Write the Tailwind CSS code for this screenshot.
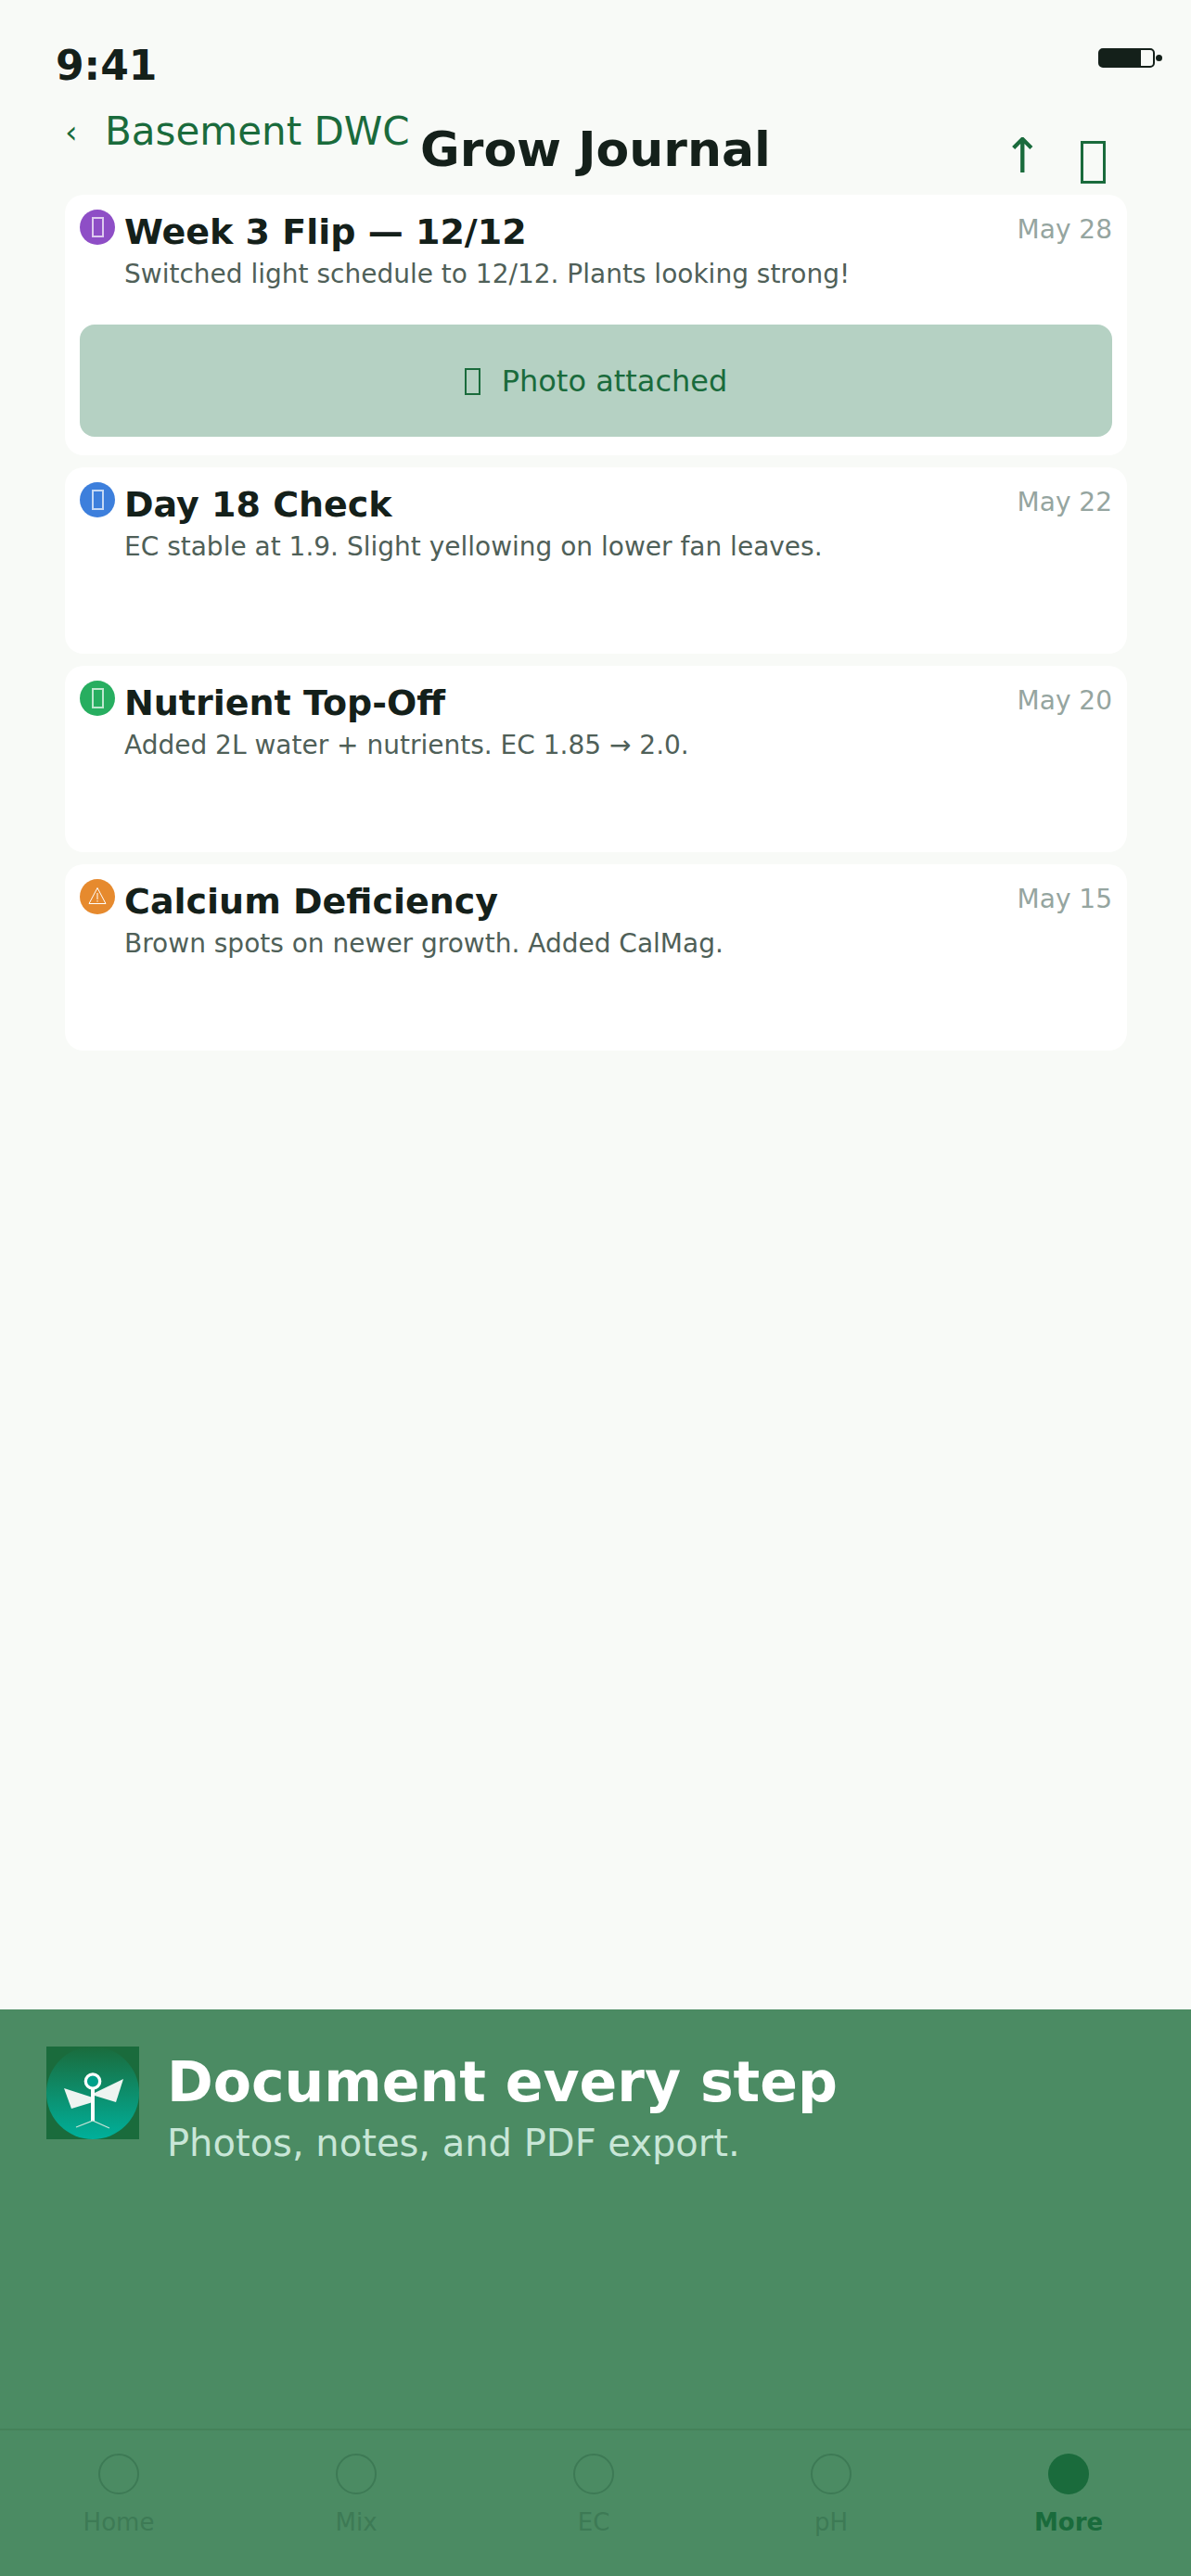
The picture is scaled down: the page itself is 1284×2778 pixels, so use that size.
<!DOCTYPE html>
<html><head><meta charset="utf-8"><script src="https://cdn.jsdelivr.net/npm/@tailwindcss/browser@4"></script></head>
<body class="m-0">
<div class="w-[1284px] h-[2778px] overflow-hidden flex flex-col bg-[#f8faf7] font-['DejaVu_Sans',sans-serif] text-[#14201a]">
  <div class="h-[112px] px-[60px] pt-[46px] flex justify-between items-start shrink-0">
    <span class="text-[44px] leading-[50px] font-bold">9:41</span>
    <div class="flex items-center gap-[1px] mt-[6px] mr-[-29px]">
      <div class="w-[61px] h-[21px] rounded-[5px] border-[2px] border-[#14201a]"><div class="w-[44px] h-full bg-[#14201a]"></div></div>
      <div class="w-[7px] h-[7px] rounded-full bg-[#14201a] shrink-0"></div>
    </div>
  </div>
  <div class="h-[98px] pl-[70px] pr-[92px] flex items-start relative shrink-0">
    <span class="text-[34px] leading-[48px] text-[#1a6b3c] mt-[6px] w-[43px]">‹</span>
    <span class="text-[42px] leading-[48px] text-[#1a6b3c] mt-[6px]">Basement DWC</span>
    <span class="absolute left-0 right-0 text-center text-[52px] leading-[60px] font-bold top-[19px]">Grow Journal</span>
    <div class="ml-auto flex items-start gap-[41px] mt-[22px]">
      <span class="text-[52px] leading-[60px] text-[#1a6b3c] mt-[4px]">↑</span>
      <div class="w-[27px] h-[46px] mt-[18px] border-[3px] border-[#1a6b3c]"></div>
    </div>
  </div>
  <div class="pl-[70px] pr-[69px] flex flex-col gap-[13px] shrink-0">
    <div class="bg-white rounded-[20px] h-[281px] p-[16px]">
      <div class="flex items-start">
        <div class="w-[38px] h-[38px] rounded-full bg-[#8e4ec6] flex items-center justify-center shrink-0"><div class="w-[13px] h-[22px] border-[2px] border-white/70"></div></div>
        <span class="ml-[10px] mt-[1px] text-[38px] leading-[46px] font-bold">Week 3 Flip — 12/12</span>
        <span class="ml-auto text-[28px] leading-[34px] text-[#95a5a0] mt-[5px]">May 28</span>
      </div>
      <p class="ml-[48px] text-[28px] leading-[34px] text-[#4f6058] mt-[6px]">Switched light schedule to 12/12. Plants looking strong!</p>
      <div class="mt-[37px] h-[121px] rounded-[16px] bg-[#b5d1c3] flex items-center justify-center gap-[23px] text-[32px] leading-[40px] text-[#1a6b3c]"><div class="w-[17px] h-[29px] mt-[2px] border-[2px] border-[#1a6b3c]"></div><span>Photo attached</span></div>
    </div>
    <div class="bg-white rounded-[20px] h-[201px] p-[16px]">
      <div class="flex items-start">
        <div class="w-[38px] h-[38px] rounded-full bg-[#3d7fdc] flex items-center justify-center shrink-0"><div class="w-[13px] h-[22px] border-[2px] border-white/70"></div></div>
        <span class="ml-[10px] mt-[1px] text-[38px] leading-[46px] font-bold">Day 18 Check</span>
        <span class="ml-auto text-[28px] leading-[34px] text-[#95a5a0] mt-[5px]">May 22</span>
      </div>
      <p class="ml-[48px] text-[28px] leading-[34px] text-[#4f6058] mt-[6px]">EC stable at 1.9. Slight yellowing on lower fan leaves.</p>
    </div>
    <div class="bg-white rounded-[20px] h-[201px] p-[16px]">
      <div class="flex items-start">
        <div class="w-[38px] h-[38px] rounded-full bg-[#27ae60] flex items-center justify-center shrink-0"><div class="w-[13px] h-[22px] border-[2px] border-white/70"></div></div>
        <span class="ml-[10px] mt-[1px] text-[38px] leading-[46px] font-bold">Nutrient Top-Off</span>
        <span class="ml-auto text-[28px] leading-[34px] text-[#95a5a0] mt-[5px]">May 20</span>
      </div>
      <p class="ml-[48px] text-[28px] leading-[34px] text-[#4f6058] mt-[6px]">Added 2L water + nutrients. EC 1.85 → 2.0.</p>
    </div>
    <div class="bg-white rounded-[20px] h-[201px] p-[16px]">
      <div class="flex items-start">
        <div class="w-[38px] h-[38px] rounded-full bg-[#e68a2e] flex items-center justify-center shrink-0">
          <svg width="20" height="20" viewBox="0 0 20 20" class="mb-[2px]"><path d="M10 1.5 L19 18.5 H1 Z" fill="none" stroke="#fff" stroke-width="1"/><rect x="9.5" y="7" width="1" height="7" fill="#fff"/><rect x="9.5" y="15" width="1" height="1.5" fill="#fff"/></svg>
        </div>
        <span class="ml-[10px] mt-[1px] text-[38px] leading-[46px] font-bold">Calcium Deficiency</span>
        <span class="ml-auto text-[28px] leading-[34px] text-[#95a5a0] mt-[5px]">May 15</span>
      </div>
      <p class="ml-[48px] text-[28px] leading-[34px] text-[#4f6058] mt-[6px]">Brown spots on newer growth. Added CalMag.</p>
    </div>
  </div>
  <div class="mt-auto h-[611px] bg-[#4b8b63] flex flex-col shrink-0">
    <div class="flex items-start pl-[50px] pt-[40px] h-[452px]">
      <div class="w-[100px] h-[100px] bg-[#1a6b3c] shrink-0">
        <svg viewBox="0 0 100 100" width="100" height="100">
          <defs><linearGradient id="g" x1="0" y1="0" x2="0" y2="1"><stop offset="0" stop-color="#1a6b3c"/><stop offset="1" stop-color="#00b09b"/></linearGradient></defs>
          <circle cx="50" cy="50" r="50" fill="url(#g)"/>
          <polygon points="19,45 50,55 50,60 27,67" fill="#eef4f1"/>
          <polygon points="83,35 75,60 52,53 52,50" fill="#eef4f1"/>
          <rect x="48" y="43" width="4" height="37" fill="#fff"/>
          <circle cx="50" cy="37.5" r="7.7" fill="#00a08a" stroke="#fff" stroke-width="3.3"/>
          <path d="M32 87 L50 80 L68 88" fill="none" stroke="#c9e4d8" stroke-width="1.2"/>
        </svg>
      </div>
      <div class="ml-[30px]">
        <div class="text-[60px] leading-[72px] font-bold text-white mt-[2px]">Document every step</div>
        <div class="text-[40px] leading-[48px] text-[#c8e6d7] mt-[6px]">Photos, notes, and PDF export.</div>
      </div>
    </div>
    <div class="border-t-[2px] border-[#458259] grid grid-cols-5 pt-[25px] pr-[4px]">
      <div class="flex flex-col items-center"><div class="w-[44px] h-[44px] rounded-full border-[2px] border-[#3d7a55]"></div><span class="text-[26px] leading-[32px] mt-[14px] text-[#3d7a55]">Home</span></div>
      <div class="flex flex-col items-center"><div class="w-[44px] h-[44px] rounded-full border-[2px] border-[#3d7a55]"></div><span class="text-[26px] leading-[32px] mt-[14px] text-[#3d7a55]">Mix</span></div>
      <div class="flex flex-col items-center"><div class="w-[44px] h-[44px] rounded-full border-[2px] border-[#3d7a55]"></div><span class="text-[26px] leading-[32px] mt-[14px] text-[#3d7a55]">EC</span></div>
      <div class="flex flex-col items-center"><div class="w-[44px] h-[44px] rounded-full border-[2px] border-[#3d7a55]"></div><span class="text-[26px] leading-[32px] mt-[14px] text-[#3d7a55]">pH</span></div>
      <div class="flex flex-col items-center"><div class="w-[44px] h-[44px] rounded-full bg-[#1a6b3c]"></div><span class="text-[26px] leading-[32px] mt-[14px] font-bold text-[#1a6b3c]">More</span></div>
    </div>
  </div>
</div>
</body></html>
